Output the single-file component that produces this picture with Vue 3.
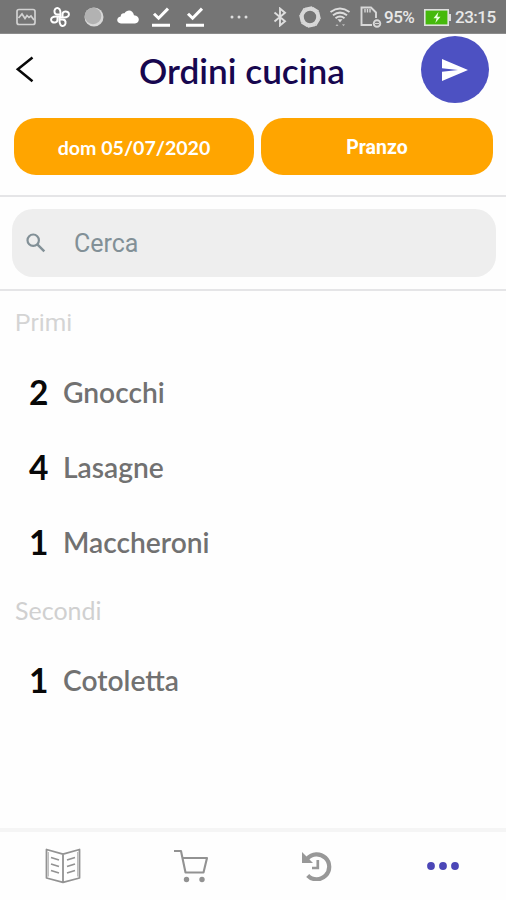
<script setup>
const sections = [
  { key: 'primi', title: 'Primi', dishes: [
    { qty: 2, name: 'Gnocchi' },
    { qty: 4, name: 'Lasagne' },
    { qty: 1, name: 'Maccheroni' },
  ] },
  { key: 'secondi', title: 'Secondi', dishes: [{ qty: 1, name: 'Cotoletta' }] },
]
const petals = [0, 90, 180, 270]
const blades = [0, 45, 90, 135, 180, 225, 270, 315]
</script>

<template>
  <div class="screen">
    <div class="status">
      <div class="notifications">
        <svg width="20" height="18" viewBox="0 0 20 18" fill="none" stroke="#d2d2d2" stroke-width="1.7">
          <rect x="1" y="1.5" width="18" height="15" rx="2" />
          <path d="M2.500 10 6 6l3 4.500 2-3 2 2 2-1.500 3 4" stroke-width="1.700" />
        </svg>
        <svg width="22" height="22" viewBox="0 0 22 22" fill="none" stroke="#fff" stroke-width="2" stroke-linejoin="round">
          <path v-for="a in petals" :key="a" :transform="`rotate(${a} 11 11)`" d="M11.500 11.500V7C11.500 0 4.800 1.200 5.500 6C5.700 7.700 7 8.500 8.500 8.500H11" />
        </svg>
        <svg width="20" height="20" viewBox="0 0 20 20">
          <circle cx="10" cy="10" r="9.500" fill="#d8d8d8" />
          <circle cx="9" cy="9" r="8.300" fill="#b2b2b2" />
        </svg>
        <svg width="22" height="14" viewBox="0 0 22 14">
          <path d="M4 13.500C-1 13.500-1 7 3.700 6.500 3.700 3.500 6 2.800 7.500 3.300 10-1 16-.5 17 5.200 23.500 5.500 23 13.500 18 13.500Z" fill="#fff" />
        </svg>
        <svg v-for="n in 2" :key="n" class="done" width="18" height="20" viewBox="0 0 18 20" fill="none" stroke="#fff" stroke-width="3">
          <path d="M2 6.700 6.600 11.200 16 1.600M0 18.200H18" />
        </svg>
        <svg class="overflow" width="18" height="6" viewBox="0 0 18 6" fill="#ddd">
          <circle cx="2" cy="3" r="1.500" /><circle cx="9" cy="3" r="1.500" /><circle cx="16" cy="3" r="1.500" />
        </svg>
      </div>
      <div class="system">
        <svg width="14" height="20" viewBox="0 0 14 20" fill="none" stroke="#dedede" stroke-width="1.900">
          <path d="M1.500 5.500 12 14.300 7 18.500V1.500L12 5.700 1.500 14.500" />
        </svg>
        <svg class="sync" width="24" height="22" viewBox="0 0 24 22" fill="none" stroke="#d8d8d8">
          <circle cx="12" cy="11" r="7.800" stroke-width="3.200" />
          <path v-for="a in blades" :key="a" :transform="`rotate(${a} 12 11)`" d="M7 2.500 13.500 1 17 5.500" stroke-width="1.500" />
        </svg>
        <svg class="wifi" width="22" height="20" viewBox="0 0 22 20" fill="none" stroke="#ddd" stroke-width="2">
          <path d="M1.500 5Q11-2 20.500 5M4 8.300Q11 3 18 8.300M6.500 11.200Q11 7.800 15.500 11.200" />
          <path d="M8.500 12.300 11 15.500 13.500 12.300Z" fill="#ddd" stroke="none" />
          <path d="m6.500 19 1.500-2 1.500 2zM13 17.200l1.500 2 1.500-2z" fill="#bbb" stroke="none" />
        </svg>
        <svg class="sd" width="22" height="22" viewBox="0 0 22 22" fill="none" stroke="#d8d8d8" stroke-width="1.900">
          <path d="M12 19H1.500V1.500H11L16 6.500V12" />
          <path d="M5 3v3.500M7.500 3v3.500M10 3v3.500" stroke-width="1.400" />
          <circle cx="17" cy="17.500" r="3.300" /><path d="M15 17.500h4" stroke-width="1.200" />
        </svg>
        <span class="percent">95%</span>
        <svg class="battery" width="27" height="17" viewBox="0 0 27 17">
          <rect x="24" y="5" width="3" height="7" fill="#ddd" />
          <rect x=".8" y=".8" width="23.400" height="15.400" fill="#45b90c" stroke="#e0e0e0" stroke-width="1.600" />
          <path d="M14.500 3 9.500 9.200H12.600L11.300 14 16.500 7.700H13.300Z" fill="#eaffdf" />
        </svg>
        <span class="clock">23:15</span>
      </div>
    </div>

    <header class="header">
      <div class="title-row">
        <svg class="back" width="20" height="28" viewBox="0 0 20 28" fill="none" stroke="#080808" stroke-width="2.500">
          <path d="M17.500 1.500 2.800 13.300 17.500 25.200" />
        </svg>
        <h1>Ordini cucina</h1>
        <button class="send" aria-label="Invia">
          <svg width="26" height="22" viewBox="0 0 26 22"><path d="M0 0 26 11 0 22V12.700L16 11 0 9.300Z" fill="#fff" /></svg>
        </button>
      </div>
      <div class="filters">
        <button class="filter date">dom 05/07/2020</button>
        <button class="filter meal">Pranzo</button>
      </div>
    </header>

    <div class="search-area">
      <div class="search">
        <svg width="20" height="20" viewBox="0 0 20 20" fill="none" stroke="#829097" stroke-width="2.200">
          <circle cx="7.200" cy="7.200" r="5.700" /><path d="m11.300 11.300 7 7" stroke-width="2.500" />
        </svg>
        <span>Cerca</span>
      </div>
    </div>

    <main>
      <section v-for="s in sections" :key="s.key">
        <h2 :class="s.key">{{ s.title }}</h2>
        <div v-for="d in s.dishes" :key="d.name" class="dish">
          <span class="qty">{{ d.qty }}</span>
          <span class="name">{{ d.name }}</span>
        </div>
      </section>
    </main>

    <nav>
      <div class="tab book">
        <svg width="36" height="36" viewBox="0 0 36 36" fill="none" stroke="#929292" stroke-width="1.800" stroke-linejoin="round">
          <path d="M18 6.200 1.500 1.500V30L18 34.300 34.500 30V1.500ZM18 6V34" />
          <path d="M3.300 4V28.500M32.700 4V28.500" stroke="#b8b8b8" stroke-width="1.200" />
          <path d="m6 9.500 8 2.500M6 16l8 2.500M6 22.500l8 2.500M30 9.500l-8 2.500M30 16l-8 2.500M30 22.500l-8 2.500" />
        </svg>
      </div>
      <div class="tab">
        <svg width="36" height="34" viewBox="0 0 36 34" fill="none" stroke="#929292" stroke-width="2.100" stroke-linejoin="round">
          <path d="M1 2H8L12.500 23.500H30.500L34 9H9.500" />
          <circle cx="13.500" cy="30.500" r="2.700" fill="#929292" stroke="none" /><circle cx="29" cy="30.500" r="2.700" fill="#929292" stroke="none" />
        </svg>
      </div>
      <div class="tab">
        <svg width="30" height="30" viewBox="0 0 30 30" fill="none" stroke="#989898" stroke-width="4.200">
          <path d="M5.300 7.600A12.500 12.500 0 1 1 5.700 24.500" />
          <path d="M0 1V12H11Z" fill="#989898" stroke="none" />
          <path d="M15.800 9V17H10" stroke-width="2.700" />
        </svg>
      </div>
      <div class="tab active">
        <svg width="32" height="8" viewBox="0 0 32 8" fill="#4b46b7">
          <circle cx="4" cy="4" r="3.900" /><circle cx="16" cy="4" r="3.900" /><circle cx="28" cy="4" r="3.900" />
        </svg>
      </div>
    </nav>
  </div>
</template>

<style>
body { margin: 0; background: #fefefe; }
</style>

<style scoped>
* { box-sizing: border-box; }
svg { display: block; flex: none; }
.screen { width: 506px; height: 900px; display: flex; flex-direction: column; background: #fefefe; overflow: hidden; font-family: Lato, sans-serif; }
.status { height: 34px; flex: none; background: #757575; border-bottom: 1px solid #8c8c8c; display: flex; justify-content: space-between; padding: 1px 10px 0 16px; color: #e8e8e8; font-family: Roboto, sans-serif; }
.notifications, .system { display: flex; align-items: center; }
.notifications { gap: 13px; }
.done { margin-right: 3px; }
.overflow { margin-left: 10px; }
.sync { margin-left: 11px; }
.wifi { margin-left: 7px; }
.sd { margin-left: 9px; }
.percent { width: 42px; padding-left: 2px; font-size: 17px; font-weight: 500; letter-spacing: -.5px; }
.clock { width: 41px; margin-left: 4px; font-size: 17px; font-weight: 500; letter-spacing: -.5px; white-space: nowrap; }
.header { height: 163px; flex: none; border-bottom: 2px solid #e5e5e7; }
.title-row { height: 71px; display: grid; grid-template-columns: 88px 308px 110px; align-items: center; }
.back { margin-left: 15px; }
h1 { margin: 1px 0 0; color: #17074f; font-size: 35.200px; line-height: 44px; font-weight: 600; text-align: center; white-space: nowrap; }
.send { width: 68px; height: 67px; margin-left: 25px; border: 0; border-radius: 50%; background: #4d51c2; display: flex; align-items: center; justify-content: center; padding: 0; }
.filters { display: grid; grid-template-columns: 240px 232px; gap: 7px; padding: 13px 13px 0 14px; }
.filter { height: 57px; padding: 0; border: 0; border-radius: 22px; background: #ffa500; color: #fff; }
.date { font: 700 19.600px Lato, sans-serif; padding-top: 2px; }
.meal { font: 700 19.500px Roboto, sans-serif; padding-top: 2px; }
.search-area { height: 94px; flex: none; padding: 12px 10px 13px 12px; border-bottom: 2px solid #e5e5e7; }
.search { height: 68px; display: flex; align-items: center; gap: 28px; padding-left: 14px; border-radius: 21px; background: #eee; color: #829097; font: 25px Roboto, sans-serif; }
main { flex: 1; }
h2 { height: 62px; margin: 0; padding: 0 15px; color: #d0d0d0; font-size: 25px; font-weight: 400; line-height: 60px; }
.primi { font-family: Roboto, sans-serif; font-size: 24.500px; height: 63px; line-height: 63px; color: #d4d4d4; }
.dish { height: 75.300px; display: grid; grid-template-columns: 34px 1fr; padding-left: 29px; align-items: center; line-height: 44px; }
.qty { color: #080808; font-size: 33.500px; font-weight: 700; }
.name { color: #717171; font-size: 28.200px; font-weight: 600; }
nav { height: 72px; flex: none; border-top: 4px solid #f5f5f5; display: grid; grid-template-columns: repeat(4, 1fr); padding-left: 1px; }
.tab { display: flex; align-items: center; justify-content: center; padding: 0 0 1px 1px; }
.book { padding: 0 2px 1px 0; }
</style>
